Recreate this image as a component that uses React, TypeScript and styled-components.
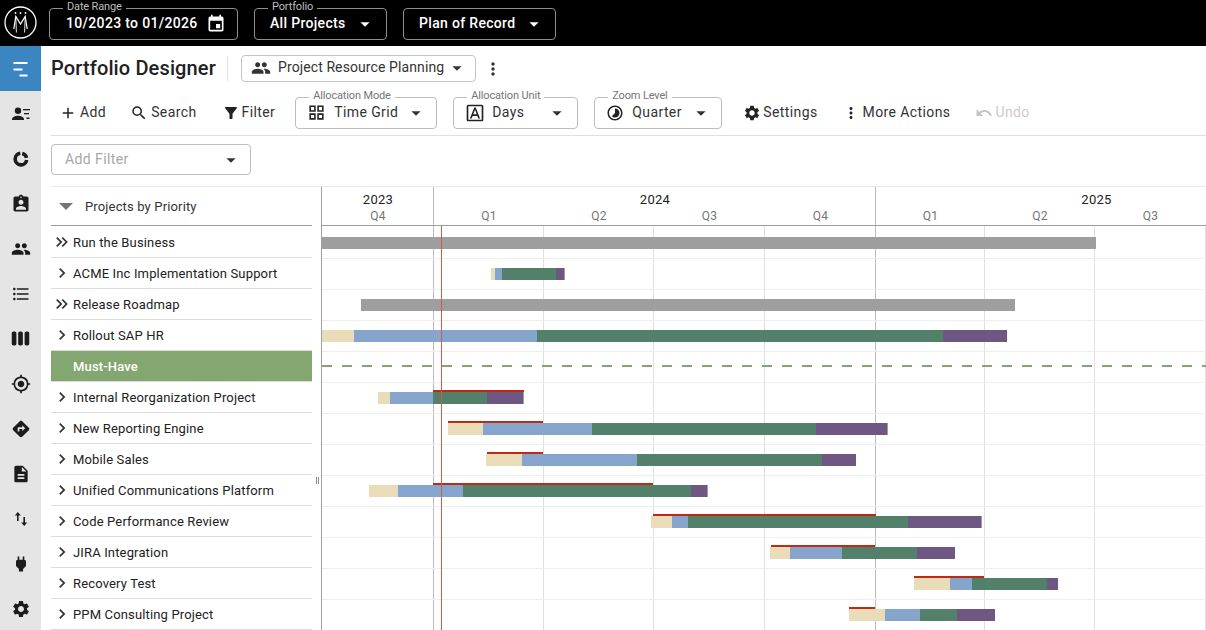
import React from 'react';
import styled, {createGlobalStyle} from 'styled-components';
import {
  MdAdd,
  MdArrowDropDown,
  MdAssignmentInd,
  MdDescription,
  MdDirections,
  MdEvent,
  MdFilterAlt,
  MdFormatListBulleted,
  MdGpsFixed,
  MdGridView,
  MdKeyboardArrowRight,
  MdKeyboardDoubleArrowRight,
  MdMoreVert,
  MdOutlineFontDownload,
  MdPeople,
  MdPower,
  MdSearch,
  MdSettings,
  MdTimelapse,
  MdUndo,
  MdViewWeek
} from 'react-icons/md';

const GlobalStyle = createGlobalStyle`
  html, body {
    margin: 0;
    height: 100%;
    overflow: hidden;
    background: #fff;
    font-family: Roboto, "Liberation Sans", sans-serif;
    color: #212121;
  }
  * {
    box-sizing: border-box;
  }
`;

const Page = styled.div`
  width: 1206px;
  height: 630px;
  display: flex;
  flex-direction: column;
  overflow: hidden;
`;

const TopBar = styled.header`
  height: 46px;
  flex: none;
  background: #000;
  display: flex;
  align-items: flex-start;
  padding: 8px 0 0 4px;
`;

const LogoWrap = styled.div`
  width: 45px;
  height: 28px;
  display: flex;
  align-items: center;
  color: #fff;
`;

const TopGroup = styled.div`
  display: flex;
  gap: 16px;
`;

const TopField = styled.div<{$width: number; $inset?: number}>`
  position: relative;
  width: ${p => p.$width}px;
  height: 32px;
  border: 1px solid #8f8f8f;
  border-radius: 4px;
  display: flex;
  align-items: center;
  justify-content: space-between;
  padding: 0 ${p => 10 + (p.$inset ?? 0)}px 0 ${p => 15 + (p.$inset ?? 0)}px;
  color: #fff;
  font-size: 14px;
  font-weight: 500;
  letter-spacing: 0.32px;
  white-space: nowrap;
`;

const TopLegend = styled.span`
  position: absolute;
  top: -9px;
  left: 13px;
  padding: 0 4px;
  background: #000;
  color: #bdbdbd;
  font-size: 11px;
  font-weight: 400;
  line-height: 13px;
  letter-spacing: -0.15px;
`;

const TopValue = styled.span`
  margin-top: -2px;
`;

const Body = styled.div`
  flex: 1;
  min-height: 0;
  display: flex;
`;

const SideNav = styled.nav`
  width: 41px;
  flex: none;
  background: #e5e5e5;
  display: flex;
  flex-direction: column;
`;

const NavItem = styled.div<{$active?: boolean}>`
  height: 45px;
  flex: none;
  display: flex;
  align-items: center;
  justify-content: center;
  background: ${p => (p.$active ? '#3b86c0' : 'transparent')};
  color: ${p => (p.$active ? '#fff' : '#1c1c1c')};
`;

const Main = styled.main`
  flex: 1;
  min-width: 0;
  display: flex;
  flex-direction: column;
  padding-left: 10px;
`;

const TitleRow = styled.div`
  height: 45px;
  flex: none;
  display: flex;
  align-items: center;
`;

const Title = styled.h1`
  margin: 0;
  width: 177px;
  height: 24px;
  border-right: 1px solid #e0e0e0;
  font-size: 20px;
  line-height: 22px;
  font-weight: 500;
  letter-spacing: 0.13px;
  white-space: nowrap;
`;

const ViewSelect = styled.div`
  width: 235px;
  height: 27px;
  margin: -1px 0 0 13px;
  border: 1px solid #c4c4c4;
  border-radius: 4px;
  display: flex;
  align-items: center;
  padding: 0 7px 0 9px;
  font-size: 14px;
  letter-spacing: 0.1px;
  white-space: nowrap;
  color: #333;

  > svg:first-child {
    margin-right: 7px;
    color: #333;
  }
  > span {
    flex: 1;
    margin-top: -2px;
  }
`;

const KebabButton = styled.div`
  display: flex;
  margin-left: 7px;
  color: #333;
`;

const Toolbar = styled.div`
  height: 45px;
  flex: none;
  border-bottom: 1px solid #e0e0e0;
  display: flex;
  align-items: center;
  padding-bottom: 1px;
`;

const ToolButton = styled.div<{$left: number; $gap?: number; $disabled?: boolean}>`
  display: flex;
  align-items: center;
  gap: ${p => p.$gap ?? 3}px;
  margin-left: ${p => p.$left}px;
  font-size: 14px;
  letter-spacing: 0.4px;
  white-space: nowrap;
  color: ${p => (p.$disabled ? '#cfc8cf' : '#333')};

  > svg {
    color: ${p => (p.$disabled ? '#c4c4c4' : '#222')};
  }
  > span {
    margin-top: -2px;
  }
`;

const ToolField = styled.div<{$width: number; $left: number; $pad: number}>`
  position: relative;
  width: ${p => p.$width}px;
  height: 32px;
  margin-left: ${p => p.$left}px;
  border: 1px solid #bdbdbd;
  border-radius: 4px;
  display: flex;
  align-items: center;
  padding: 0 9px 0 12px;
  font-size: 14px;
  letter-spacing: 0.4px;
  color: #333;

  > svg:first-of-type {
    margin: 0 ${p => p.$pad}px 0 -1px;
    color: #222;
  }
  > span:not(:first-child) {
    flex: 1;
    margin-top: -2px;
  }
`;

const ToolLegend = styled.span`
  position: absolute;
  top: -9px;
  left: 13px;
  padding: 0 4px;
  background: #fff;
  color: #757575;
  font-size: 11px;
  line-height: 13px;
  letter-spacing: -0.15px;
  white-space: nowrap;
`;

const FilterRow = styled.div`
  height: 51px;
  flex: none;
  border-bottom: 1px solid #e8e8e8;
  padding-top: 8px;
`;

const FilterSelect = styled.div`
  width: 200px;
  height: 31px;
  border: 1px solid #bdbdbd;
  border-radius: 4px;
  display: flex;
  align-items: center;
  justify-content: space-between;
  padding: 0 8px 0 13px;
  font-size: 14px;
  letter-spacing: 0.4px;
  color: #a8a8a8;

  > svg {
    color: #333;
  }
  > span {
    margin-top: -2px;
  }
`;

const Workspace = styled.div`
  flex: 1;
  min-height: 0;
  display: flex;
  overflow: hidden;
`;

const ListPane = styled.div`
  width: 261px;
  flex: none;
`;

const ListHeader = styled.div`
  height: 39px;
  border-bottom: 1px solid #9e9e9e;
  margin-bottom: 1px;
  display: flex;
  align-items: center;
  gap: 12px;
  padding: 1px 0 0 8px;
  font-size: 13px;
  letter-spacing: 0.15px;
  color: #333;
`;

const CollapseCaret = styled.span`
  width: 0;
  height: 0;
  border-left: 7px solid transparent;
  border-right: 7px solid transparent;
  border-top: 7px solid #757575;
`;

const ListRow = styled.div<{$band?: boolean}>`
  height: 31px;
  border-bottom: 1px solid #dcdcdc;
  display: flex;
  align-items: center;
  padding-left: ${p => (p.$band ? 22 : 1)}px;
  background: ${p => (p.$band ? '#84a771' : 'transparent')};
  color: ${p => (p.$band ? '#fff' : '#212121')};
  font-size: 13px;
  font-weight: ${p => (p.$band ? 500 : 400)};
  letter-spacing: 0.15px;
  white-space: nowrap;

  > svg {
    flex: none;
    margin-right: 1px;
    color: #333;
  }
`;

const Resizer = styled.div`
  width: 10px;
  flex: none;
  border-right: 1px solid #9e9e9e;
  display: flex;
  align-items: flex-start;
  justify-content: center;
  padding-top: 290px;
`;

const ResizeGrip = styled.span`
  width: 3px;
  height: 7px;
  margin-left: 1px;
  border-left: 1px solid #8a8a8a;
  border-right: 1px solid #8a8a8a;
`;

const TimelinePane = styled.div`
  flex: 1;
  min-width: 0;
  display: flex;
  flex-direction: column;
  overflow: hidden;
`;

const TimeHeader = styled.div`
  height: 39px;
  flex: none;
  display: flex;
  border-bottom: 1px solid #9e9e9e;
`;

const YearGroup = styled.div<{$first?: boolean}>`
  flex: none;
  border-left: ${p => (p.$first ? 'none' : '1px solid #bdbdbd')};
  margin-left: ${p => (p.$first ? 0 : -1)}px;
`;

const YearName = styled.div`
  height: 22px;
  padding-top: 5px;
  text-align: center;
  font-size: 13px;
  line-height: 16px;
  letter-spacing: 0.3px;
  color: #222;
`;

const QuarterRow = styled.div`
  display: flex;
`;

const QuarterName = styled.div`
  flex: none;
  text-align: center;
  font-size: 12px;
  line-height: 14px;
  letter-spacing: 0.3px;
  color: #757575;
`;

const TimeBody = styled.div`
  position: relative;
  flex: 1;
  padding-top: 2px;
`;

const GridLayer = styled.div`
  position: absolute;
  inset: 0;
  display: flex;
`;

const GridCell = styled.div<{$year?: boolean}>`
  flex: none;
  border-right: 1px solid ${p => (p.$year ? '#bdbdbd' : '#e0e0e0')};
`;

const TodayLine = styled.div`
  position: absolute;
  top: 0;
  bottom: 0;
  left: 119px;
  width: 1px;
  background: #cf5a49;
  z-index: 3;
`;

const TimeRow = styled.div`
  position: relative;
  height: 31px;
  border-bottom: 1px solid #eeeeee;
`;

const DashedRule = styled.div`
  position: absolute;
  top: 13px;
  left: 0;
  right: 0;
  height: 2px;
  background: repeating-linear-gradient(90deg, #84a771 0 10px, transparent 10px 20px);
`;

const Bar = styled.div`
  position: absolute;
  top: 9px;
  height: 12px;
  display: flex;
  z-index: 2;
`;

const Segment = styled.div<{$color: string}>`
  flex: none;
  height: 100%;
  background: ${p => p.$color};
`;

const Baseline = styled.div`
  position: absolute;
  top: 7px;
  height: 2px;
  background: #c02a14;
  z-index: 2;
`;

const ORIGIN = 322;

const PHASES = ['#e8dcb9', '#86a5cc', '#53806b', '#6e5783', '#9e9e9e'];

const YEARS = [
  {name: '2023', quarters: [{name: 'Q4', width: 112}]},
  {
    name: '2024',
    quarters: [
      {name: 'Q1', width: 110},
      {name: 'Q2', width: 110},
      {name: 'Q3', width: 111},
      {name: 'Q4', width: 111}
    ]
  },
  {
    name: '2025',
    quarters: [
      {name: 'Q1', width: 109},
      {name: 'Q2', width: 110},
      {name: 'Q3', width: 111},
      // runs off the right edge of the window, only its width counts
      {name: '', width: 111}
    ]
  }
];

type Project = {
  name: string;
  kind: 'double' | 'single' | 'band' | 'blank';
  summary?: [number, number];
  stops?: number[];
  base?: [number, number];
};

// x positions are page pixels, converted to timeline offsets while rendering
const PROJECTS: Project[] = [
  {name: 'Run the Business', kind: 'double', summary: [322, 1096]},
  {name: 'ACME Inc Implementation Support', kind: 'single', stops: [491, 495, 502, 556, 564, 565]},
  {name: 'Release Roadmap', kind: 'double', summary: [361, 1015]},
  {name: 'Rollout SAP HR', kind: 'single', stops: [322, 354, 537, 943, 1007]},
  {name: 'Must-Have', kind: 'band'},
  {name: 'Internal Reorganization Project', kind: 'single', stops: [378, 390, 433, 487, 523, 524], base: [433, 524]},
  {name: 'New Reporting Engine', kind: 'single', stops: [448, 483, 592, 816, 887, 888], base: [448, 543]},
  {name: 'Mobile Sales', kind: 'single', stops: [486, 522, 637, 822, 856], base: [487, 543]},
  {name: 'Unified Communications Platform', kind: 'single', stops: [369, 398, 463, 691, 707, 708], base: [433, 653]},
  {name: 'Code Performance Review', kind: 'single', stops: [651, 672, 688, 908, 981, 982], base: [653, 876]},
  {name: 'JIRA Integration', kind: 'single', stops: [770, 790, 842, 917, 955], base: [771, 875]},
  {name: 'Recovery Test', kind: 'single', stops: [914, 950, 972, 1047, 1058], base: [914, 984]},
  {name: 'PPM Consulting Project', kind: 'single', stops: [849, 885, 920, 957, 995], base: [849, 875]},
  {name: '', kind: 'blank'}
];

const GanttIcon = () => (
  <svg width="20" height="20" viewBox="0 0 20 20" fill="currentColor">
    <rect x="2.500" y="3" width="14" height="2" />
    <rect x="2.500" y="9.500" width="9" height="2" />
    <rect x="8.500" y="15.500" width="8" height="2" />
  </svg>
);

const ResourceListIcon = () => (
  <svg width="20" height="20" viewBox="0 0 20 20" fill="currentColor">
    <circle cx="7" cy="6.800" r="3.200" />
    <path d="M1 15.500c0-2.400 3.400-3.700 6-3.700s6 1.300 6 3.700V16H1z" />
    <rect x="12" y="5" width="7" height="1.300" />
    <rect x="13" y="9" width="5" height="1.300" />
    <rect x="15.500" y="13.500" width="3" height="1.500" />
  </svg>
);

const DonutIcon = () => (
  <svg width="20" height="20" viewBox="0 0 20 20" fill="none" stroke="currentColor" strokeWidth="3.600">
    <path d="M9.300 4.300A5.800 5.800 0 1 0 15.700 11" />
    <path d="M11.200 4.400A5.800 5.800 0 0 1 15.600 8.800" />
  </svg>
);

const TransferIcon = () => (
  <svg width="20" height="20" viewBox="0 0 20 20" fill="currentColor">
    <path d="M6.800 3 3.800 6.600h2.200V12h1.600V6.600h2.200z" />
    <path d="M13.200 17l3-3.600H14V8h-1.600v5.400h-2.200z" />
  </svg>
);

const Logo = () => (
  <svg width="33" height="33" viewBox="0 0 33 33" fill="none" stroke="currentColor">
    <circle cx="16.500" cy="16.500" r="15.500" strokeWidth="1.300" />
    <path d="M9.800 23 11.800 10.500 16.500 18 21.200 10.500 23.200 23" strokeWidth="1.200" />
    <path d="M11.800 10.500 12.400 26.500M21.200 10.500 20.600 26.500" strokeWidth="0.900" />
    <circle cx="11.500" cy="7" r="0.900" fill="currentColor" stroke="none" />
    <circle cx="16.500" cy="7" r="0.900" fill="currentColor" stroke="none" />
    <circle cx="21.500" cy="7" r="0.900" fill="currentColor" stroke="none" />
  </svg>
);

const NAV_ICONS = [
  <GanttIcon />,
  <ResourceListIcon />,
  <DonutIcon />,
  <MdAssignmentInd size={20} />,
  <MdPeople size={20} />,
  <MdFormatListBulleted size={20} />,
  <MdViewWeek size={21} />,
  <MdGpsFixed size={20} />,
  <MdDirections size={20} />,
  <MdDescription size={20} />,
  <TransferIcon />,
  <MdPower size={20} />,
  <MdSettings size={20} />
];

const ProjectBar = ({stops}: {stops: number[]}) => (
  <Bar style={{left: stops[0] - ORIGIN}}>
    {stops.slice(1).map((stop, i) => (
      <Segment key={i} $color={PHASES[i]} style={{width: stop - stops[i]}} />
    ))}
  </Bar>
);

const App = () => {
  const quarters = YEARS.flatMap(y => y.quarters.map((q, i) => ({...q, yearEnd: i === y.quarters.length - 1})));

  return (
    <Page>
      <GlobalStyle />
      <TopBar>
        <LogoWrap>
          <Logo />
        </LogoWrap>
        <TopGroup>
          <TopField $width={189} $inset={1}>
            <TopLegend>Date Range</TopLegend>
            <TopValue>10/2023 to 01/2026</TopValue>
            <MdEvent size={20} />
          </TopField>
          <TopField $width={133}>
            <TopLegend>Portfolio</TopLegend>
            <TopValue>All Projects</TopValue>
            <MdArrowDropDown size={22} />
          </TopField>
          <TopField $width={153}>
            <TopValue>Plan of Record</TopValue>
            <MdArrowDropDown size={22} />
          </TopField>
        </TopGroup>
      </TopBar>
      <Body>
        <SideNav>
          {NAV_ICONS.map((icon, i) => (
            <NavItem key={i} $active={i === 0}>
              {icon}
            </NavItem>
          ))}
        </SideNav>
        <Main>
          <TitleRow>
            <Title>Portfolio Designer</Title>
            <ViewSelect>
              <MdPeople size={20} />
              <span>Project Resource Planning</span>
              <MdArrowDropDown size={22} />
            </ViewSelect>
            <KebabButton>
              <MdMoreVert size={20} />
            </KebabButton>
          </TitleRow>
          <Toolbar>
            <ToolButton $left={8}>
              <MdAdd size={18} />
              <span>Add</span>
            </ToolButton>
            <ToolButton $left={24}>
              <MdSearch size={18} />
              <span>Search</span>
            </ToolButton>
            <ToolButton $left={25} $gap={2}>
              <MdFilterAlt size={18} />
              <span>Filter</span>
            </ToolButton>
            <ToolField $width={142} $left={20} $pad={8}>
              <ToolLegend>Allocation Mode</ToolLegend>
              <MdGridView size={19} />
              <span>Time Grid</span>
              <MdArrowDropDown size={22} />
            </ToolField>
            <ToolField $width={125} $left={16} $pad={7}>
              <ToolLegend>Allocation Unit</ToolLegend>
              <MdOutlineFontDownload size={20} />
              <span>Days</span>
              <MdArrowDropDown size={22} />
            </ToolField>
            <ToolField $width={128} $left={16} $pad={8}>
              <ToolLegend>Zoom Level</ToolLegend>
              <MdTimelapse size={18} />
              <span>Quarter</span>
              <MdArrowDropDown size={22} />
            </ToolField>
            <ToolButton $left={21} $gap={2}>
              <MdSettings size={18} />
              <span>Settings</span>
            </ToolButton>
            <ToolButton $left={24} $gap={3}>
              <MdMoreVert size={18} />
              <span>More Actions</span>
            </ToolButton>
            <ToolButton $left={25} $gap={2} $disabled>
              <MdUndo size={18} />
              <span>Undo</span>
            </ToolButton>
          </Toolbar>
          <FilterRow>
            <FilterSelect>
              <span>Add Filter</span>
              <MdArrowDropDown size={22} />
            </FilterSelect>
          </FilterRow>
          <Workspace>
            <ListPane>
              <ListHeader>
                <CollapseCaret />
                Projects by Priority
              </ListHeader>
              {PROJECTS.map((p, i) => (
                <ListRow key={i} $band={p.kind === 'band'}>
                  {p.kind === 'double' && <MdKeyboardDoubleArrowRight size={20} />}
                  {p.kind === 'single' && <MdKeyboardArrowRight size={20} />}
                  {p.name}
                </ListRow>
              ))}
            </ListPane>
            <Resizer>
              <ResizeGrip />
            </Resizer>
            <TimelinePane>
              <TimeHeader>
                {YEARS.map((y, i) => (
                  <YearGroup key={y.name} $first={i === 0}>
                    <YearName>{y.name}</YearName>
                    <QuarterRow>
                      {y.quarters.map((q, j) => (
                        <QuarterName key={j} style={{width: q.width}}>
                          {q.name}
                        </QuarterName>
                      ))}
                    </QuarterRow>
                  </YearGroup>
                ))}
              </TimeHeader>
              <TimeBody>
                <GridLayer>
                  {quarters.map((q, i) => (
                    <GridCell key={i} $year={q.yearEnd} style={{width: q.width}} />
                  ))}
                </GridLayer>
                <TodayLine />
                {PROJECTS.map((p, i) => (
                  <TimeRow key={i}>
                    {p.kind === 'band' && <DashedRule />}
                    {p.summary && (
                      <Bar style={{left: p.summary[0] - ORIGIN}}>
                        <Segment $color="#9e9e9e" style={{width: p.summary[1] - p.summary[0]}} />
                      </Bar>
                    )}
                    {p.stops && <ProjectBar stops={p.stops} />}
                    {p.base && <Baseline style={{left: p.base[0] - ORIGIN, width: p.base[1] - p.base[0]}} />}
                  </TimeRow>
                ))}
              </TimeBody>
            </TimelinePane>
          </Workspace>
        </Main>
      </Body>
    </Page>
  );
};

export default App;
